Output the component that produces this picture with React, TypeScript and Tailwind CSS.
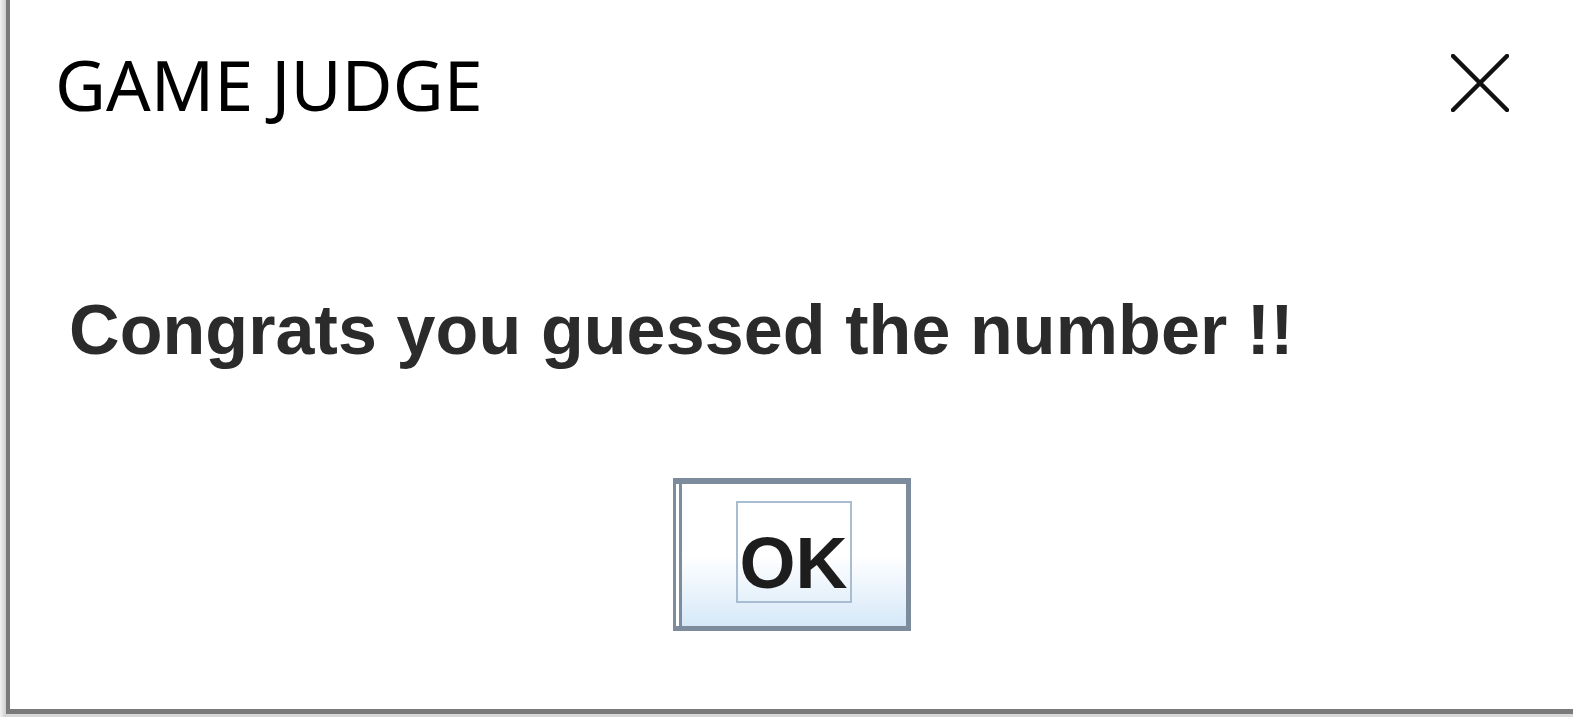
export default function App() {
  return (
    <div className="h-[717px] w-[1573px] bg-white flex overflow-hidden">
      {/* window frame: left edge + bottom edge */}
      <div className="w-[6px] bg-gradient-to-r from-[#f2f2f2] to-[#cfcfcf]" />
      <div className="flex-1 flex flex-col">
        <div className="flex-1 flex flex-col border-l-[4px] border-b-[5px] border-[#7a7a7a]">
          {/* title bar */}
          <div className="h-[170px] flex items-start justify-between">
            <h1
              className="pl-[45px] pt-[40px] text-[70px] leading-[88px] text-black"
              style={{ fontFamily: '"Noto Sans", "Open Sans", sans-serif' }}
            >
              GAME JUDGE
            </h1>
            <button className="mt-[54px] mr-[64px] w-[58px] h-[58px] flex items-center justify-center">
              <svg width="58" height="58" viewBox="0 0 58 58" fill="none">
                <path d="M2 2L56 56M56 2L2 56" stroke="#111" strokeWidth="4.5" strokeLinecap="round" />
              </svg>
            </button>
          </div>

          {/* message */}
          <div
            className="pl-[59px] pt-[120px] text-[#2b2b2b] text-[70px] font-bold leading-[80px] tracking-[0.1px]"
            style={{ fontFamily: '"Liberation Sans", Arial, sans-serif' }}
          >
            Congrats you guessed the number !!
          </div>

          {/* button row */}
          <div className="flex-1 flex justify-center pt-[108px]">
            <button className="h-[153px] w-[238px] border-[3px] border-t-[6px] border-r-[5px] border-b-[5px] border-[#7d8c9c] flex">
              <div className="w-[3px] bg-white" />
              <div className="w-[3px] bg-[#7d8c9c]" />
              <div className="flex-1 bg-gradient-to-b from-white via-white to-[#d6e8f8] flex items-start justify-center">
                <span
                  className="mt-[17px] border-[2px] border-[#a9bdd2] pt-[22px] h-[102px] w-[116px] flex items-center justify-center text-[#1d1d1d] text-[72px] font-bold"
                  style={{ fontFamily: '"Liberation Sans", Arial, sans-serif' }}
                >
                  OK
                </span>
              </div>
            </button>
          </div>
        </div>
        <div className="h-[3px] bg-[#d8d8d8]" />
      </div>
    </div>
  );
}
